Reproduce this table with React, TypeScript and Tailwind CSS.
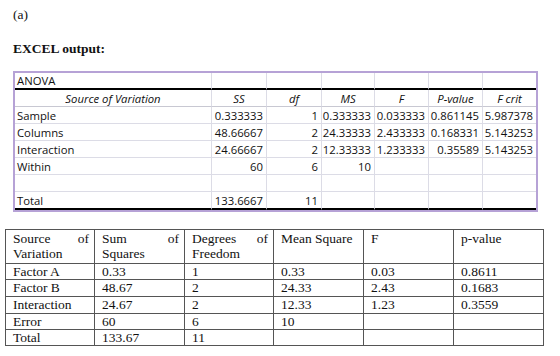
const excelCols = "grid-cols-[197px_55px_55px_53px_54px_54px_53px]";

type Row = string[];

const excelRows: Row[] = [
  ["Sample", "0.333333", "1", "0.333333", "0.033333", "0.861145", "5.987378"],
  ["Columns", "48.66667", "2", "24.33333", "2.433333", "0.168331", "5.143253"],
  ["Interaction", "24.66667", "2", "12.33333", "1.233333", "0.35589", "5.143253"],
  ["Within", "60", "6", "10", "", "", ""],
  ["", "", "", "", "", "", ""],
  ["Total", "133.6667", "11", "", "", "", ""],
];

const wordRows: Row[] = [
  ["Factor A", "0.33", "1", "0.33", "0.03", "0.8611"],
  ["Factor B", "48.67", "2", "24.33", "2.43", "0.1683"],
  ["Interaction", "24.67", "2", "12.33", "1.23", "0.3559"],
  ["Error", "60", "6", "10", "", ""],
  ["Total", "133.67", "11", "", "", ""],
];

const wordRowHeights = ["h-[16px]", "h-[17px]", "h-[17px]", "h-[16px]", "h-[16px]"];

function ExcelTable() {
  const headers = ["Source of Variation", "SS", "df", "MS", "F", "P-value", "F crit"];
  return (
    <div className="ml-[13px] w-[525px] border-2 border-[#b6a2d6] font-['Open_Sans',sans-serif] text-[11.3px] text-[#111]">
      {/* ANOVA title row */}
      <div className={`grid ${excelCols}`}>
        {headers.map((_, i) => (
          <div
            key={i}
            className={`flex h-[17px] items-end border-b-2 border-b-black pb-[0px] pl-[2px] leading-[15px] ${i < 6 ? "border-r border-r-[#dcdce6]" : ""}`}
          >
            {i === 0 ? "ANOVA" : ""}
          </div>
        ))}
      </div>
      {/* header row */}
      <div className={`grid ${excelCols}`}>
        {headers.map((h, i) => (
          <div
            key={h}
            className={`flex h-[17px] items-end justify-center border-b border-b-[#c8c8d2] italic leading-[15px] ${i < 6 ? "border-r border-r-[#dcdce6]" : ""}`}
          >
            {h}
          </div>
        ))}
      </div>
      {excelRows.map((row, r) => {
        const last = r === excelRows.length - 1;
        return (
          <div key={r} className={`grid ${excelCols}`}>
            {row.map((cell, i) => (
              <div
                key={i}
                className={`flex items-end leading-[15px] ${last ? "h-[18px] border-b-2 border-b-black" : "h-[17px] border-b border-b-[#dcdce6]"} ${i === 0 ? "pl-[2px]" : "justify-end pr-[3px]"} ${i < 6 ? "border-r border-r-[#dcdce6]" : ""}`}
              >
                {cell}
              </div>
            ))}
          </div>
        );
      })}
    </div>
  );
}

function WordTable() {
  const headers = ["Source of Variation", "Sum of Squares", "Degrees of Freedom", "Mean Square", "F", "p-value"];
  const cols = "grid-cols-[89px_90px_89px_90px_90px_90px]";
  return (
    <div className="ml-[5px] w-[539px] border-l border-t border-[#555] font-['Liberation_Serif',serif] text-[13.5px] text-[#111]">
      <div className={`grid ${cols}`}>
        {headers.map((h) => (
          <div
            key={h}
            className="h-[34px] border-b border-r border-[#555] pl-[7px] pr-[5px] pt-[2px] text-justify leading-[14.5px]"
          >
            {h}
          </div>
        ))}
      </div>
      {wordRows.map((row, r) => (
        <div key={r} className={`grid ${cols}`}>
          {row.map((cell, i) => (
            <div
              key={i}
              className={`${wordRowHeights[r]} border-b border-r border-[#555] pl-[7px] leading-[16px]`}
            >
              {cell}
            </div>
          ))}
        </div>
      ))}
    </div>
  );
}

export default function App() {
  return (
    <div className="h-[356px] w-[560px] bg-white pt-[7px]">
      <p className="ml-[13px] font-['Liberation_Serif',serif] text-[13.5px] leading-[16px] text-[#111]">(a)</p>
      <p className="ml-[13px] mt-[18px] font-['Liberation_Serif',serif] text-[13.5px] font-bold leading-[16px] text-[#111]">
        EXCEL output:
      </p>
      <div className="mt-[14px]">
        <ExcelTable />
      </div>
      <div className="mt-[17px]">
        <WordTable />
      </div>
    </div>
  );
}
